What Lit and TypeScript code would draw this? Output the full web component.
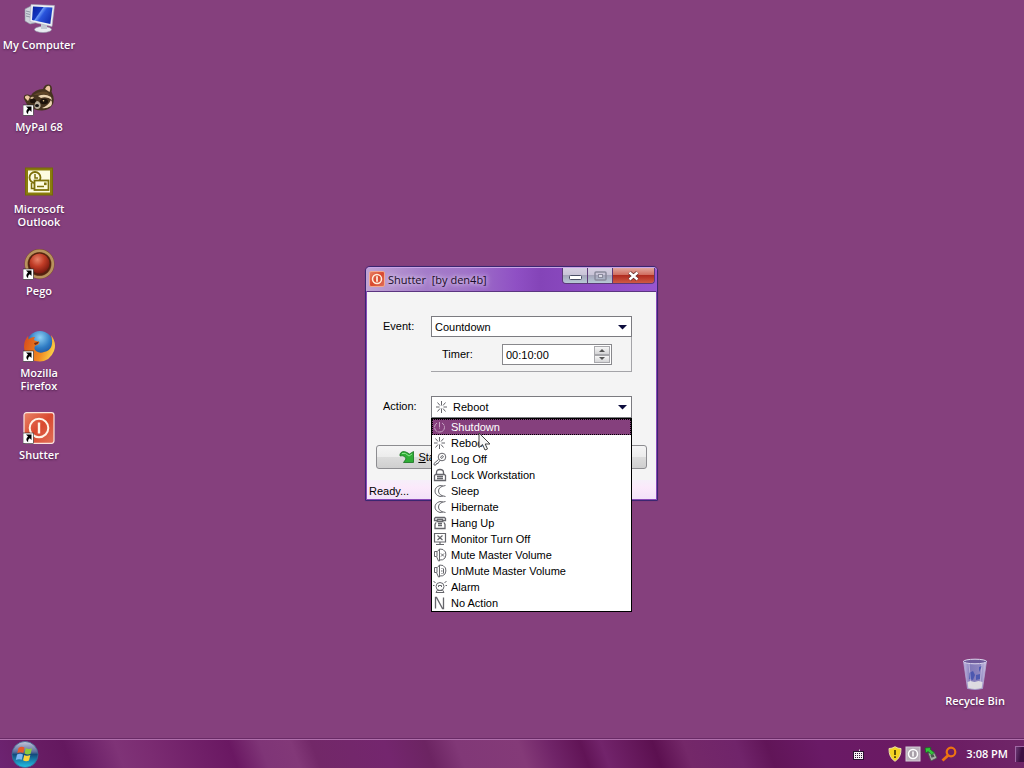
import { LitElement, html, css, svg } from "lit";
import { customElement, property, state } from "lit/decorators.js";
import { classMap } from "lit/directives/class-map.js";

/* ---------- desktop pictures, 32x32 ---------- */

const shortcutArrow = svg`
  <rect x="0" y="21" width="10.500" height="10.500" fill="#fff" stroke="#222" stroke-width=".6"/>
  <path d="M3 22.500h5.500v5.500l-1.700-1.700q-2.200 1-1.600 4q-3.600-2.800-.2-5.800z" fill="#000"/>`;

const shutterTile = svg`
  <rect x="1" y="0.700" width="30" height="30.600" rx="2.500" fill="url(#tile)" stroke="#fbe4de" stroke-width="1.200"/>
  <circle cx="16" cy="16" r="9.300" fill="none" stroke="#fff3e6" stroke-width="2"/>
  <path d="M16 10.500v11" stroke="#fff3e6" stroke-width="2.400"/>`;

const tileGradient = svg`
  <linearGradient id="tile" x1="0" y1="0" x2="1" y2="1">
    <stop offset="0" stop-color="#e88468"/><stop offset=".5" stop-color="#d9492f"/><stop offset="1" stop-color="#e0705a"/>
  </linearGradient>`;

const pictures: Record<string, unknown> = {
  computer: svg`
    <defs><linearGradient id="scr" x1="0" y1="0" x2="1" y2=".6">
      <stop offset="0" stop-color="#0a1f9c"/><stop offset=".4" stop-color="#1236c0"/><stop offset=".45" stop-color="#6a98f6"/><stop offset=".6" stop-color="#2a55dc"/><stop offset="1" stop-color="#1430b4"/>
    </linearGradient></defs>
    <path d="M2 7l6-3 4 1v16l-5 1-5-3z" fill="#cfd4dc" stroke="#8b90a0" stroke-width=".6"/>
    <path d="M3 9l4 1M3 11.500l4 1M3 14l4 1" stroke="#7d8496" stroke-width=".8"/>
    <ellipse cx="20" cy="27.500" rx="8.500" ry="3" fill="#e8ebf0" stroke="#9aa0b0" stroke-width=".6"/>
    <path d="M18 21l6 1v5h-6z" fill="#c3c9d4"/>
    <path d="M8 2.500l23.500 1-2.500 21L7 19.500z" fill="#eef1f5" stroke="#a6abba" stroke-width=".6"/>
    <path d="M10 4.500l19.500 1-2.200 16.600L9 17.900z" fill="url(#scr)"/>`,
  raccoon: svg`
    <path d="M1 15q-1-5 4-4.500l3 1Q12 5 20 5Q22-.5 27 .8q3 2 1.500 7Q32 14 30 20q-3 6-11 6.500-9 0-15-6z" fill="#46331f"/>
    <path d="M22 5q2-4.500 4.500-3 1.500 2 0 6z" fill="#eec7a0"/>
    <path d="M2 14q-.5-3 3-2.500l2 1.500-2 4z" fill="#eec7a0"/>
    <path d="M10 11q7-5 14-3l4 4q-7-3-13-1z" fill="#5f4628"/>
    <path d="M15 12q7-3 13 1l1 3q-5-4-11-2z" fill="#ecd5b2"/>
    <path d="M28 16q2 3 0 6-5 3-9 2 6-2 9-8z" fill="#ecd5b2"/>
    <path d="M7 14q2-2 4-1l-2 3z" fill="#d4b88d"/>
    <ellipse cx="21" cy="17.500" rx="4" ry="2.800" fill="#1b120b"/><ellipse cx="10" cy="17" rx="3" ry="2.200" fill="#1b120b"/>
    <circle cx="20.500" cy="16.800" r=".8" fill="#e8c890"/>
    <path d="M12 19q2-4 5 0 2 4-2 6-5 0-3-6z" fill="#b8ae9c"/><ellipse cx="14" cy="21.500" rx="2" ry="1.500" fill="#111"/>
    ${shortcutArrow}`,
  outlook: svg`
    <rect x="2.500" y="2" width="27" height="27" fill="#8a7d0c" stroke="#756a08"/>
    <rect x="5" y="4.500" width="22" height="22" fill="#fdfce0"/>
    <circle cx="12" cy="11.500" r="5.500" fill="#fdfce0" stroke="#7c700a" stroke-width="1.800"/>
    <path d="M12 8v4h3" fill="none" stroke="#7c700a" stroke-width="1.500"/>
    <rect x="11.500" y="14.500" width="14" height="9.500" fill="#fdfce0" stroke="#7c700a" stroke-width="1.800"/>
    <path d="M8.500 17v5.500h3M14 20.500h7" fill="none" stroke="#7c700a" stroke-width="1.500"/>
    <rect x="21" y="16.500" width="2.600" height="2.600" fill="#7c700a"/>`,
  pego: svg`
    <defs><radialGradient id="ball" cx=".4" cy=".3" r=".7">
      <stop offset="0" stop-color="#e8826a"/><stop offset=".5" stop-color="#c03c26"/><stop offset="1" stop-color="#7a1a10"/>
    </radialGradient></defs>
    <circle cx="16.500" cy="16" r="15" fill="#7b4d28"/>
    <circle cx="16.500" cy="16" r="13.300" fill="none" stroke="#b8925e" stroke-width="2.600"/>
    <circle cx="16.500" cy="16" r="11.500" fill="#54200f"/>
    <circle cx="16.500" cy="15.500" r="10" fill="url(#ball)"/>
    ${shortcutArrow}`,
  firefox: svg`
    <defs>
      <radialGradient id="globe" cx=".5" cy=".25" r=".8"><stop offset="0" stop-color="#8fd0f4"/><stop offset=".5" stop-color="#2f7cc4"/><stop offset="1" stop-color="#153a86"/></radialGradient>
      <linearGradient id="fox" x1="0" y1=".3" x2="1" y2=".6"><stop offset="0" stop-color="#d9501a"/><stop offset=".6" stop-color="#f08a22"/><stop offset="1" stop-color="#fbd64a"/></linearGradient>
    </defs>
    <circle cx="17" cy="14" r="13" fill="url(#globe)"/>
    <path d="M28 5q6 8 3 16-4 10-14 10.500Q6 31.500 2 22q-3-9 3-16l.5 3.500Q8 6.500 12 7q-1.500 2-.5 3.500l5 1.500q-.5 3-4 3.500-2.500 3 .5 5.500 4 3 8 1 6-1 7.500-6 1.500-5-.5-11z" fill="url(#fox)"/>
    <path d="M11 13q3-1 5-1.500-1 3-4 3.500z" fill="#7a2a10"/>
    ${shortcutArrow}`,
  shutter: svg`<defs>${tileGradient}</defs>${shutterTile}${shortcutArrow}`,
  bin: svg`
    <defs><linearGradient id="glass" x1="0" y1="0" x2="1" y2="0">
      <stop offset="0" stop-color="#c3b9e2"/><stop offset=".3" stop-color="#8079b8"/><stop offset=".75" stop-color="#8f86c0"/><stop offset="1" stop-color="#d4cbe8"/>
    </linearGradient></defs>
    <path d="M4.500 3L8.500 30.500q7.500 2 15 0L27.500 3z" fill="url(#glass)" stroke="#b4a9d4" stroke-width=".8"/>
    <ellipse cx="16" cy="3.500" rx="11.500" ry="2.300" fill="#6d5a9a" stroke="#ddd8ee" stroke-width="1"/>
    <path d="M8.500 24l3-1 4 1 4-1 4 1-.8 6q-7 2-13.400 0z" fill="#dddbe0"/>
    <path d="M10 15l4-2 2 4-2 5-4-1zM17 17l4-1v5l-4 1zM20 9l3-1-3 6z" fill="#3f4fac" opacity=".8"/>
    <path d="M10 6l2 22M23 6l-2 20" stroke="#e6e0f4" stroke-width=".8" opacity=".6"/>`,
};

/* ---------- action glyphs, 14x14 ---------- */

const glyphs: Record<string, unknown> = {
  shutdown: svg`<path d="M4 3Q1.500 4.500 1.500 7.500q.5 4.500 5 4.500t5-4.500Q11.500 4.500 9 3M6.500 2v6.500" stroke-dasharray="5 .6"/>`,
  reboot: svg`<path d="M6.500 1v4.500M6.500 8.500V13M1 7h3.500M8.500 7H12M2.500 2.500l2.500 3M10.500 2.500l-2.500 3M2.500 11.500l2.500-3M10.500 11.500l-2.500-3"/>`,
  logoff: svg`<circle cx="9" cy="5" r="3.800"/><path d="M7.500 5.500l1.500-2 1.500 1-1.500 2zM5.500 7.500l-4.500 4v1.500h2l.5-1.500H5l.500-1.500 2-1.500"/>`,
  lock: svg`<path d="M3.500 6V4.500Q3.500 1.500 7 1.500t3.500 3V6M2.500 6.500h9l1 1v5h-11v-5zM4 8.500h6M4 10.500h6" stroke-width="1.300"/>`,
  moon: svg`<path d="M7 1.500Q2 3 2 7t5 5.500M12.500 1.500Q5.500 2.500 5.500 7t7 5.500M7 1.500l3 .5M7 12.500l3-.500"/>`,
  phone: svg`<path d="M2.500 1.500h9l1 1v2h-3v-1h-5v1h-3v-2zM3.500 5.500h7M3 6.500l-1 2v4h10v-4l-1-2M5 7.500h4M5 9.500h4" stroke-width="1.300"/>`,
  monitor: svg`<path d="M1.500 1.500h11v8.500h-11zM4.500 3.500l5 4.500M9.500 3.500l-5 4.500M7 10v2.500M3 12.500h8" stroke-width="1.200"/>`,
  mute: svg`<path d="M4 3.500H1.500v5H3.500l2 4.500h1v-12q4-.5 6 3 1 3-.5 6-2 2.500-5.500 2M4 3.500v5M6.500 1l-2 2.500M8 5.500l3 3M11 5.500l-3 3"/>`,
  unmute: svg`<path d="M4 3.500H1.500v5H3.500l2 4.500h1v-12q4-.5 6 3 1 3-.5 6-2 2.500-5.500 2M4 3.500v5M6.500 1l-2 2.500M8 7h1.500M10.500 4.500v5M8.500 4.500h1M8.500 9.500h1"/>`,
  alarm: svg`<circle cx="7" cy="6.500" r="4"/><path d="M5.500 7V5.500h3V7M.5 1l2 2M13.500 1l-2 2M0 5.500h1.500M12.500 5.500H14M4.500 10l-1.500 2.500h8L9.500 10M5 10.500h4"/>`,
  none: svg`<path d="M2.500 12.500v-11h1l6 11h1v-11" stroke-width="1.300"/>`,
};

const actions: Array<[string, string]> = [
  ["shutdown", "Shutdown"],
  ["reboot", "Reboot"],
  ["logoff", "Log Off"],
  ["lock", "Lock Workstation"],
  ["moon", "Sleep"],
  ["moon", "Hibernate"],
  ["phone", "Hang Up"],
  ["monitor", "Monitor Turn Off"],
  ["mute", "Mute Master Volume"],
  ["unmute", "UnMute Master Volume"],
  ["alarm", "Alarm"],
  ["none", "No Action"],
];

const glyph = (name: string) => html`
  <svg class="glyph" width="14" height="14" viewBox="0 0 14 14" aria-hidden="true">${glyphs[name]}</svg>`;

@customElement("desktop-icon")
class DesktopIcon extends LitElement {
  @property() picture = "";
  @property() label = "";

  static styles = css`
    :host { display: block; }
    .icon {
      display: flex;
      flex-direction: column;
      align-items: center;
      gap: 4px;
      width: 78px;
      padding: 0;
      border: 0;
      background: none;
      color: #fff;
      font: 600 11px/13px "Open Sans", "Noto Sans", sans-serif;
      text-align: center;
      text-shadow: 0 1px 2px #4a1c48;
    }
    .icon svg { display: block; }
    .label { max-width: 74px; }
  `;

  render() {
    return html`<button class="icon" type="button">
      <svg width="32" height="32" viewBox="0 0 32 32" aria-hidden="true">${pictures[this.picture]}</svg>
      <span class="label">${this.label}</span>
    </button>`;
  }
}

@customElement("shutter-window")
class ShutterWindow extends LitElement {
  @state() private action = "Reboot";
  @state() private hot = "Shutdown";

  static styles = css`
    :host {
      display: block;
      box-sizing: border-box;
      border: 1px solid #3b2670;
      border-radius: 5px 5px 1px 1px;
      background: #8a4ab8;
      box-shadow: 0 0 1px #5d2f70;
      color: #000;
      font: 11px/16px "Liberation Sans", Arial, sans-serif;
    }
    .title {
      display: flex;
      align-items: flex-start;
      height: 23px;
      border-radius: 4px 4px 0 0;
      border-top: 1px solid #c9a4e6;
      background: linear-gradient(90deg, #c0a4d4 0, #a47cc9 60px, #a074c8 100px, #8f50c4 150px, #8444b8 60%, #9855d0 100%);
    }
    .badge { margin: 3px 3px 0 3px; }
    .caption {
      flex: 1;
      font: 11px/23px "Open Sans", "Noto Sans", sans-serif;
      color: #1a0c28;
      white-space: pre;
      text-shadow: 0 0 4px #e8dcf4, 0 0 6px #e0d0f0;
    }
    .chrome {
      display: flex;
      margin-right: 2px;
      border: 1px solid #5c3a78;
      border-top: 0;
      border-radius: 0 0 4px 4px;
      overflow: hidden;
    }
    .tool {
      display: grid;
      place-items: center;
      width: 25px;
      height: 15px;
      padding: 0;
      border: 0;
      border-right: 1px solid #5c3a78;
      background: linear-gradient(#d6cfe2 0, #c8c3d6 48%, #a5a5ba 50%, #b7cad6 100%);
    }
    .tool.close {
      width: 41px;
      border-right: 0;
      background: linear-gradient(#e2a79e 0, #cf6a5c 48%, #b02c20 50%, #cf5a45 100%);
    }
    .client {
      margin: 0 1px 1px 1px;
      border-top: 1px solid #5b3580;
      background: #f4f4f4;
    }
    .form {
      display: grid;
      grid-template-columns: 48px 1fr;
      padding: 24px 24px 0 16px;
    }
    .name { padding-top: 2px; }
    .select {
      display: block;
      box-sizing: border-box;
      width: 100%;
      height: 21px;
      padding: 0 3px;
      border: 1px solid #7b7b80;
      border-radius: 0;
      appearance: none;
      background: #fff;
      color: #000;
      font: inherit;
    }
    .combo { position: relative; }
    .combo .select.with-icon { height: 22px; padding-left: 21px; }
    .combo .lead { position: absolute; left: 4px; top: 4px; }
    .lead .glyph { display: block; }
    .arrow { position: absolute; right: 5px; top: 9px; pointer-events: none; }
    .glyph { fill: none; stroke: #66666c; stroke-width: 1; flex: none; }
    .details {
      display: flex;
      box-sizing: border-box;
      height: 35px;
      padding: 7px 19px 0 11px;
      border: 1px solid #a4a4a8;
      border-top: 0;
      border-left: 0;
      justify-content: space-between;
    }
    .details label { padding-top: 2px; }
    .spin {
      display: flex;
      box-sizing: border-box;
      width: 110px;
      height: 21px;
      padding: 1px;
      border: 1px solid #88888c;
      background: #fff;
    }
    .time {
      flex: 1;
      min-width: 0;
      padding: 0 2px;
      border: 0;
      background: none;
      font: inherit;
      outline: 0;
    }
    .steps { display: grid; grid-template-rows: 1fr 1fr; width: 16px; }
    .step {
      display: grid;
      place-items: center;
      padding: 0;
      border: 1px solid #a8a8ac;
      background: linear-gradient(#f6f6f6, #d4d4d6);
    }
    .second { padding-top: 24px; }
    .name.second { padding-top: 26px; }
    .menu {
      position: absolute;
      z-index: 2;
      top: 100%;
      left: 0;
      right: 0;
      margin: 0;
      padding: 0;
      border: 1px solid #000;
      border-top: 0;
      background: #fff;
      list-style: none;
    }
    .menu { border-top: 1px solid #000; }
    .item {
      display: flex;
      align-items: center;
      gap: 4px;
      box-sizing: border-box;
      height: 16px;
      padding-left: 1px;
    }
    .item.hot {
      background: #85407d;
      color: #fff;
      outline: 1px dotted #000;
      outline-offset: -1px;
    }
    .item.hot .glyph { stroke: #c9a6c6; }
    .buttons {
      display: grid;
      grid-template-columns: repeat(3, 1fr);
      gap: 5px;
      padding: 27px 9px 0;
    }
    .push {
      display: flex;
      align-items: center;
      justify-content: center;
      gap: 3px;
      height: 24px;
      padding: 0 0 0 2px;
      border: 1px solid #8c8c90;
      border-radius: 3px;
      background: linear-gradient(#f5f5f5 0, #ececec 48%, #dcdcdc 50%, #cfcfcf 100%);
      color: #000;
      font: inherit;
    }
    .status {
      margin-top: 11px;
      padding: 3px 2px 0;
      background: linear-gradient(#f6effa, #fbe9fb 40%, #f2e2f8);
    }
  `;

  private arrow() {
    return html`<svg class="arrow" width="9" height="5" viewBox="0 0 9 5" aria-hidden="true"><path d="M0 0h9L4.500 4.500z" fill="#0c0c3c"/></svg>`;
  }

  render() {
    const current = actions.find(([, name]) => name === this.action) ?? actions[0];
    return html`
      <header class="title">
        <svg class="badge" width="16" height="16" viewBox="0 0 32 32" aria-hidden="true"><defs>${tileGradient}</defs>
          <rect x="1" y="1" width="30" height="30" rx="3" fill="url(#tile)" stroke="#f0a890" stroke-width="2"/>
          <circle cx="16" cy="16" r="9" fill="none" stroke="#ffeedd" stroke-width="3"/>
          <path d="M16 10.500v11" stroke="#ffeedd" stroke-width="3.500"/>
        </svg>
        <span class="caption">Shutter  [by den4b]</span>
        <div class="chrome">
          <button class="tool" type="button" aria-label="Minimize">
            <svg width="13" height="10" viewBox="0 0 13 10"><rect x=".5" y="4.500" width="12" height="4" rx="1" fill="#fff" stroke="#4b4f66"/></svg>
          </button>
          <button class="tool" type="button" aria-label="Maximize">
            <svg width="13" height="10" viewBox="0 0 13 10"><rect x="1" y="1" width="11" height="8" rx="1" fill="none" stroke="#8a8a9c" stroke-width="1.500"/><rect x="4.500" y="3.500" width="4" height="3" fill="#dcdce6" stroke="#8a8a9c"/></svg>
          </button>
          <button class="tool close" type="button" aria-label="Close">
            <svg width="13" height="10" viewBox="0 0 13 10"><path d="M2.500 1.500l8 7M10.500 1.500l-8 7" stroke="#5e2a2a" stroke-width="4"/><path d="M2.500 1.500l8 7M10.500 1.500l-8 7" stroke="#fff" stroke-width="2.400"/></svg>
          </button>
        </div>
      </header>
      <section class="client">
        <div class="form">
          <label class="name" for="event">Event:</label>
          <div>
            <div class="combo">
              <select class="select" id="event"><option>Countdown</option></select>
              ${this.arrow()}
            </div>
            <div class="details">
              <label for="timer">Timer:</label>
              <div class="spin">
                <input class="time" id="timer" type="text" value="00:10:00" />
                <div class="steps">
                  <button class="step" type="button" aria-label="Up"><svg width="6" height="3" viewBox="0 0 6 3"><path d="M0 3h6L3 0z" fill="#555"/></svg></button>
                  <button class="step" type="button" aria-label="Down"><svg width="6" height="3" viewBox="0 0 6 3"><path d="M0 0h6L3 3z" fill="#555"/></svg></button>
                </div>
              </div>
            </div>
          </div>
          <label class="name second" for="action">Action:</label>
          <div class="second">
            <div class="combo">
              <select class="select with-icon" id="action" .value=${this.action}
                @change=${(e: Event) => (this.action = (e.target as HTMLSelectElement).value)}>
                ${actions.map(([, name]) => html`<option ?selected=${name === this.action}>${name}</option>`)}
              </select>
              <span class="lead">${glyph(current[0])}</span>
              ${this.arrow()}
              <ul class="menu" role="listbox" aria-label="Action">
                ${actions.map(([icon, name]) => html`
                  <li class=${classMap({ item: true, hot: name === this.hot })} role="option"
                    aria-selected=${name === this.hot ? "true" : "false"}
                    @mouseenter=${() => (this.hot = name)} @click=${() => (this.action = name)}>
                    ${glyph(icon)}<span>${name}</span>
                  </li>`)}
              </ul>
            </div>
          </div>
        </div>
        <div class="buttons">
          <button class="push" type="button">
            <svg width="16" height="14" viewBox="0 0 16 14" aria-hidden="true">
              <path d="M1 4Q3 0 8 2.500L10.500 4 14.500 1.500V12.500H4.500L7 9Q6 5 1 6z" fill="#2fae36" stroke="#17711f" stroke-width=".8"/>
              <path d="M3 3.500q3-1.500 7 2.500l3-2" fill="none" stroke="#8ee48e" stroke-width="1"/>
            </svg>
            <span><u>S</u>tart</span>
          </button>
          <button class="push" type="button" aria-label="Stop"></button>
          <button class="push" type="button" aria-label="Menu"></button>
        </div>
        <div class="status">Ready...</div>
      </section>`;
  }
}

@customElement("app-root")
class AppRoot extends LitElement {
  static styles = css`
    :host {
      display: grid;
      grid-template-rows: 1fr auto;
      min-height: 100vh;
      background: #85407d;
      font-family: "Open Sans", "Noto Sans", sans-serif;
    }
    .desktop { position: relative; }
    .icons {
      display: grid;
      grid-auto-rows: 82px;
      padding-top: 2px;
      justify-content: start;
    }
    .bin { position: absolute; right: 10px; bottom: 32px; }
    .window { position: absolute; left: 365px; top: 266px; width: 293px; }
    .cursor { position: absolute; z-index: 3; left: 478px; top: 432px; pointer-events: none; }
    .taskbar {
      display: flex;
      align-items: center;
      height: 28px;
      border-top: 1px solid #b070ac;
      box-shadow: 0 -1px 0 #692a66;
      background: linear-gradient(70deg, #6d2472 0, #681d64 4%, #64185f 7%, #6e2269 9%, #7f3377 12%, #7b2c72 15%, #701f68 20%, #6a1862 23%, #7f3577 26%, #823878 29%, #722868 31%, #74266e 38%, #6c2462 42%, #813877 45%, #843a78 51%, #702468 54%, #611456 57%, #72246b 59%, #5c1050 64%, #742869 67%, #70246a 72%, #611558 75%, #6a1a66 80%, #6b1a62 90%, #6f2668 100%);
    }
    .start { display: grid; margin-left: 11px; padding: 0; border: 0; border-radius: 50%; background: none; }
    .tray { display: flex; align-items: center; gap: 3px; margin-left: auto; }
    .tray svg { display: block; }
    .keyboard { margin-right: 21px; }
    .clock { margin: 0 4px 0 6px; color: #fff; font-size: 11px; line-height: 16px; font-weight: 600; }
    .peek {
      align-self: stretch;
      width: 9px;
      padding: 0;
      border: 1px solid #a068a4;
      border-right: 0;
      border-bottom: 0;
      background: linear-gradient(100deg, #6b3a74, #3c0f42 60%);
    }
  `;

  private icons: Array<[string, string]> = [
    ["computer", "My Computer"],
    ["raccoon", "MyPal 68"],
    ["outlook", "Microsoft Outlook"],
    ["pego", "Pego"],
    ["firefox", "Mozilla Firefox"],
    ["shutter", "Shutter"],
  ];

  render() {
    return html`
      <main class="desktop">
        <div class="icons">
          ${this.icons.map(([picture, label]) => html`<desktop-icon picture=${picture} label=${label}></desktop-icon>`)}
        </div>
        <desktop-icon class="bin" picture="bin" label="Recycle Bin"></desktop-icon>
        <shutter-window class="window"></shutter-window>
        <svg class="cursor" width="13" height="20" viewBox="0 0 13 20" aria-hidden="true">
          <path d="M1 1v14.500l3.500-3L7 18l2.500-1-2.300-5h4.800z" fill="#f6f6f6" stroke="#444" stroke-width="1"/>
        </svg>
      </main>
      <footer class="taskbar">
        <button class="start" type="button" aria-label="Start">
          <svg width="28" height="28" viewBox="0 0 28 28">
            <defs><linearGradient id="orb" x1="0" y1="0" x2="0" y2="1">
              <stop offset="0" stop-color="#c4c8dc"/><stop offset=".4" stop-color="#5c6c9c"/><stop offset=".5" stop-color="#124b7c"/><stop offset="1" stop-color="#22c4e8"/>
            </linearGradient></defs>
            <circle cx="14" cy="14.500" r="13" fill="url(#orb)" stroke="#3d6a92" stroke-width=".8"/>
            <path d="M7.500 8q3-2.300 6-.5l-1.200 5.500q-3-1.500-6 .3z" fill="#e8582a"/>
            <path d="M14.700 8q3 1.800 6.300.2l-1.400 5.600q-3 1.500-6-.3z" fill="#8ccb3c"/>
            <path d="M6 14.600q3-1.700 6-.2l-1.200 5.400q-3-1.400-6 .3z" fill="#7cb8f4"/>
            <path d="M13.300 14.900q3 1.700 6 .2l-1.300 5.500q-3 1.500-6-.3z" fill="#fbd23c"/>
          </svg>
        </button>
        <div class="tray">
          <svg class="keyboard" width="11" height="11" viewBox="0 0 11 11" aria-hidden="true">
            <path d="M6.500 2V.5" stroke="#ddd"/><rect x=".5" y="2.500" width="10" height="8" fill="#f4f0f4" stroke="#2a1030"/>
            <path d="M2 4.500h7M2 6.500h7M2 8.500h7" stroke="#2a1030" stroke-dasharray="1 1"/>
          </svg>
          <svg width="14" height="16" viewBox="0 0 14 16" aria-hidden="true">
            <path d="M7 .7q3 2 6 1.800.3 9-6 12.800Q.7 11.500 1 2.500 4 2.700 7 .7z" fill="#f5d423" stroke="#e9e2a8" stroke-width="1"/>
            <path d="M7 4v5M7 10.300v1.700" stroke="#3a3000" stroke-width="1.600"/>
          </svg>
          <svg width="16" height="16" viewBox="0 0 16 16" aria-hidden="true">
            <rect x="1" y="1" width="14" height="14" fill="#b9b0ba" stroke="#d6cdd6"/><circle cx="8" cy="8" r="4.500" fill="#a79ea8" stroke="#fff" stroke-width="1.500"/><path d="M8 5.500v5" stroke="#fff" stroke-width="1.500"/>
          </svg>
          <svg width="14" height="16" viewBox="0 0 14 16" aria-hidden="true">
            <path d="M4 7l6-1 3 6-6 3z" fill="#aab0a8" stroke="#46504a" stroke-width=".8"/><path d="M6.500 9l3-.7 1 2.500-3 1z" fill="#4c5650"/>
            <path d="M1 2l6-.5-.8 1.700 4 3.300-2.500 2.500-3.500-3.500L2 7z" fill="#34c43c" stroke="#116a1c" stroke-width=".7"/>
          </svg>
          <svg width="16" height="16" viewBox="0 0 16 16" aria-hidden="true">
            <circle cx="10" cy="6" r="4.300" fill="none" stroke="#ee7411" stroke-width="2.200"/><path d="M7 9.500l-5.500 5" stroke="#ee7411" stroke-width="2.800"/>
          </svg>
          <time class="clock">3:08 PM</time>
          <button class="peek" type="button" aria-label="Show desktop"></button>
        </div>
      </footer>`;
  }
}
